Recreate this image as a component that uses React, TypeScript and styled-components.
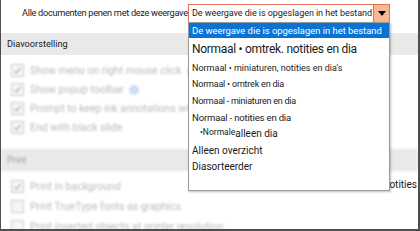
import styled, { createGlobalStyle } from "styled-components";

const GlobalStyle = createGlobalStyle`
    html, body {
        margin: 0;
        padding: 0;
        background: #fff;
    }
`;

const Frame = styled.div`
    position: relative;
    width: 420px;
    height: 231px;
    box-sizing: border-box;
    overflow: hidden;
    background: #fff;
    border-left: 1px solid #4f4f4f;
    border-right: 2px solid #4f4f4f;
    border-bottom: 2px solid #4f4f4f;
    font-family: Roboto, "Liberation Sans", sans-serif;
    color: #1a1a1a;
`;

const TopRow = styled.div`
    height: 33px;
    box-sizing: border-box;
    display: flex;
    align-items: flex-start;
    padding: 4px 0 0 21px;
`;

const Label = styled.div`
    width: 166px;
    flex-shrink: 0;
    font-size: 9.2px;
    line-height: 18px;
    letter-spacing: -0.3px;
    white-space: nowrap;
`;

const Select = styled.div`
    width: 202px;
    height: 19px;
    box-sizing: border-box;
    display: flex;
    border: 1px solid #e0735a;
    background: #fff;
`;

const SelectText = styled.div`
    flex: 1;
    font-size: 9px;
    line-height: 17px;
    padding-left: 3px;
    letter-spacing: -0.05px;
    white-space: nowrap;
    overflow: hidden;
`;

const Arrow = styled.div`
    width: 15px;
    background: #f7b694;
    border-left: 1px solid #e0735a;
    display: flex;
    align-items: center;
    justify-content: center;
`;

const SectionHeader = styled.div<{ $blur?: boolean }>`
    height: 22px;
    background: #e9e9e9;
    padding-left: 6px;
    font-size: 9.2px;
    line-height: 22px;
    color: ${(p) => (p.$blur ? "#9c9c9c" : "#1a1a1a")};
    filter: ${(p) => (p.$blur ? "blur(1px)" : "none")};
`;

const Group = styled.div<{ $top: number; $bottom: number }>`
    padding: ${(p) => p.$top}px 0 ${(p) => p.$bottom}px 0;
`;

const Row = styled.div<{ $h: number }>`
    height: ${(p) => p.$h}px;
    display: flex;
    align-items: center;
    padding-left: 10px;
    padding-right: 1px;
`;

const Faded = styled.div`
    display: flex;
    align-items: center;
    gap: 6px;
    filter: blur(1.1px);
    opacity: 0.75;
    white-space: nowrap;
`;

const Box = styled.div`
    width: 11px;
    height: 11px;
    border: 1px solid #b9b9b9;
    background: #f4f4f4;
    display: flex;
    align-items: center;
    justify-content: center;
    flex-shrink: 0;
`;

const RowText = styled.span`
    font-size: 10.5px;
    color: #a3a3a3;
`;

const Info = styled.span`
    width: 10px;
    height: 10px;
    border-radius: 50%;
    background: #bcd3ee;
    margin-left: -1px;
`;

const Side = styled.span`
    margin-left: auto;
    font-size: 10px;
    color: #1a1a1a;
    white-space: nowrap;
    position: relative;
    top: -2px;
`;

const List = styled.div`
    position: absolute;
    left: 187px;
    top: 22px;
    width: 202px;
    height: 169px;
    box-sizing: border-box;
    background: #fff;
    border: 1px solid #9a9a9a;
    box-shadow: 1px 1px 2px rgba(0, 0, 0, 0.25);
`;

const Item = styled.div<{ $h: number; $size: number; $ls?: number; $active?: boolean; $indent?: number }>`
    height: ${(p) => p.$h}px;
    display: flex;
    align-items: center;
    padding-left: ${(p) => p.$indent ?? 3}px;
    font-size: ${(p) => p.$size}px;
    letter-spacing: ${(p) => p.$ls ?? 0}px;
    white-space: nowrap;
    background: ${(p) => (p.$active ? "#0a74d6" : "transparent")};
    color: ${(p) => (p.$active ? "#fff" : "#1a1a1a")};
`;

const Sup = styled.span`
    font-size: 8.5px;
    position: relative;
    top: -2px;
`;

const Check = () => (
    <svg width="9" height="9" viewBox="0 0 9 9">
        <path d="M1.5 4.8 L3.6 7 L7.6 1.8" fill="none" stroke="#9a9a9a" strokeWidth="1.3" />
    </svg>
);

const options: { text: string; h: number; size: number; ls: number }[] = [
    { text: "Normaal • omtrek. notities en dia", h: 22, size: 12, ls: -0.3 },
    { text: "Normaal • miniaturen, notities en dia's", h: 15, size: 9, ls: 0 },
    { text: "Normaal • omtrek en dia", h: 17, size: 9, ls: -0.2 },
    { text: "Normaal - miniaturen en dia", h: 17, size: 9, ls: -0.25 },
    { text: "Normaal - notities en dia", h: 16, size: 9.6, ls: -0.2 },
];

export default function App() {
    return (
        <>
            <GlobalStyle />
            <Frame>
                <TopRow>
                    <Label>Alle documenten penen met deze weergave</Label>
                    <Select>
                        <SelectText>De weergave die is opgeslagen in het bestand</SelectText>
                        <Arrow>
                            <svg width="8" height="5" viewBox="0 0 8 5">
                                <path d="M0 0 H8 L4 5 Z" fill="#000" />
                            </svg>
                        </Arrow>
                    </Select>
                </TopRow>

                <SectionHeader>Diavoorstelling</SectionHeader>
                <Group $top={6} $bottom={12}>
                    <Row $h={19}>
                        <Faded>
                            <Box><Check /></Box>
                            <RowText>Show menu on right mouse click</RowText>
                            <Info />
                        </Faded>
                    </Row>
                    <Row $h={19}>
                        <Faded>
                            <Box><Check /></Box>
                            <RowText>Show popup toolbar</RowText>
                            <Info />
                        </Faded>
                    </Row>
                    <Row $h={19}>
                        <Faded>
                            <Box><Check /></Box>
                            <RowText>Prompt to keep ink annotations when exiting</RowText>
                        </Faded>
                    </Row>
                    <Row $h={19}>
                        <Faded>
                            <Box><Check /></Box>
                            <RowText>End with black slide</RowText>
                        </Faded>
                    </Row>
                </Group>

                <SectionHeader $blur>Print</SectionHeader>
                <Group $top={5} $bottom={0}>
                    <Row $h={20}>
                        <Faded>
                            <Box><Check /></Box>
                            <RowText>Print in background</RowText>
                        </Faded>
                        <Side>Notities</Side>
                    </Row>
                    <Row $h={20}>
                        <Faded>
                            <Box />
                            <RowText>Print TrueType fonts as graphics</RowText>
                        </Faded>
                    </Row>
                    <Row $h={20}>
                        <Faded>
                            <Box />
                            <RowText>Print inserted objects at printer resolution</RowText>
                        </Faded>
                    </Row>
                </Group>

                <List>
                    <Item $h={15} $size={9.4} $active>De weergave die is opgeslagen in het bestand</Item>
                    {options.map((o) => (
                        <Item key={o.text} $h={o.h} $size={o.size} $ls={o.ls}>{o.text}</Item>
                    ))}
                    <Item $h={17} $size={10} $indent={11}>
                        <Sup>•Normale</Sup>alleen dia
                    </Item>
                    <Item $h={17} $size={10}>Alleen overzicht</Item>
                    <Item $h={15} $size={10}>Diasorteerder</Item>
                </List>
            </Frame>
        </>
    );
}
